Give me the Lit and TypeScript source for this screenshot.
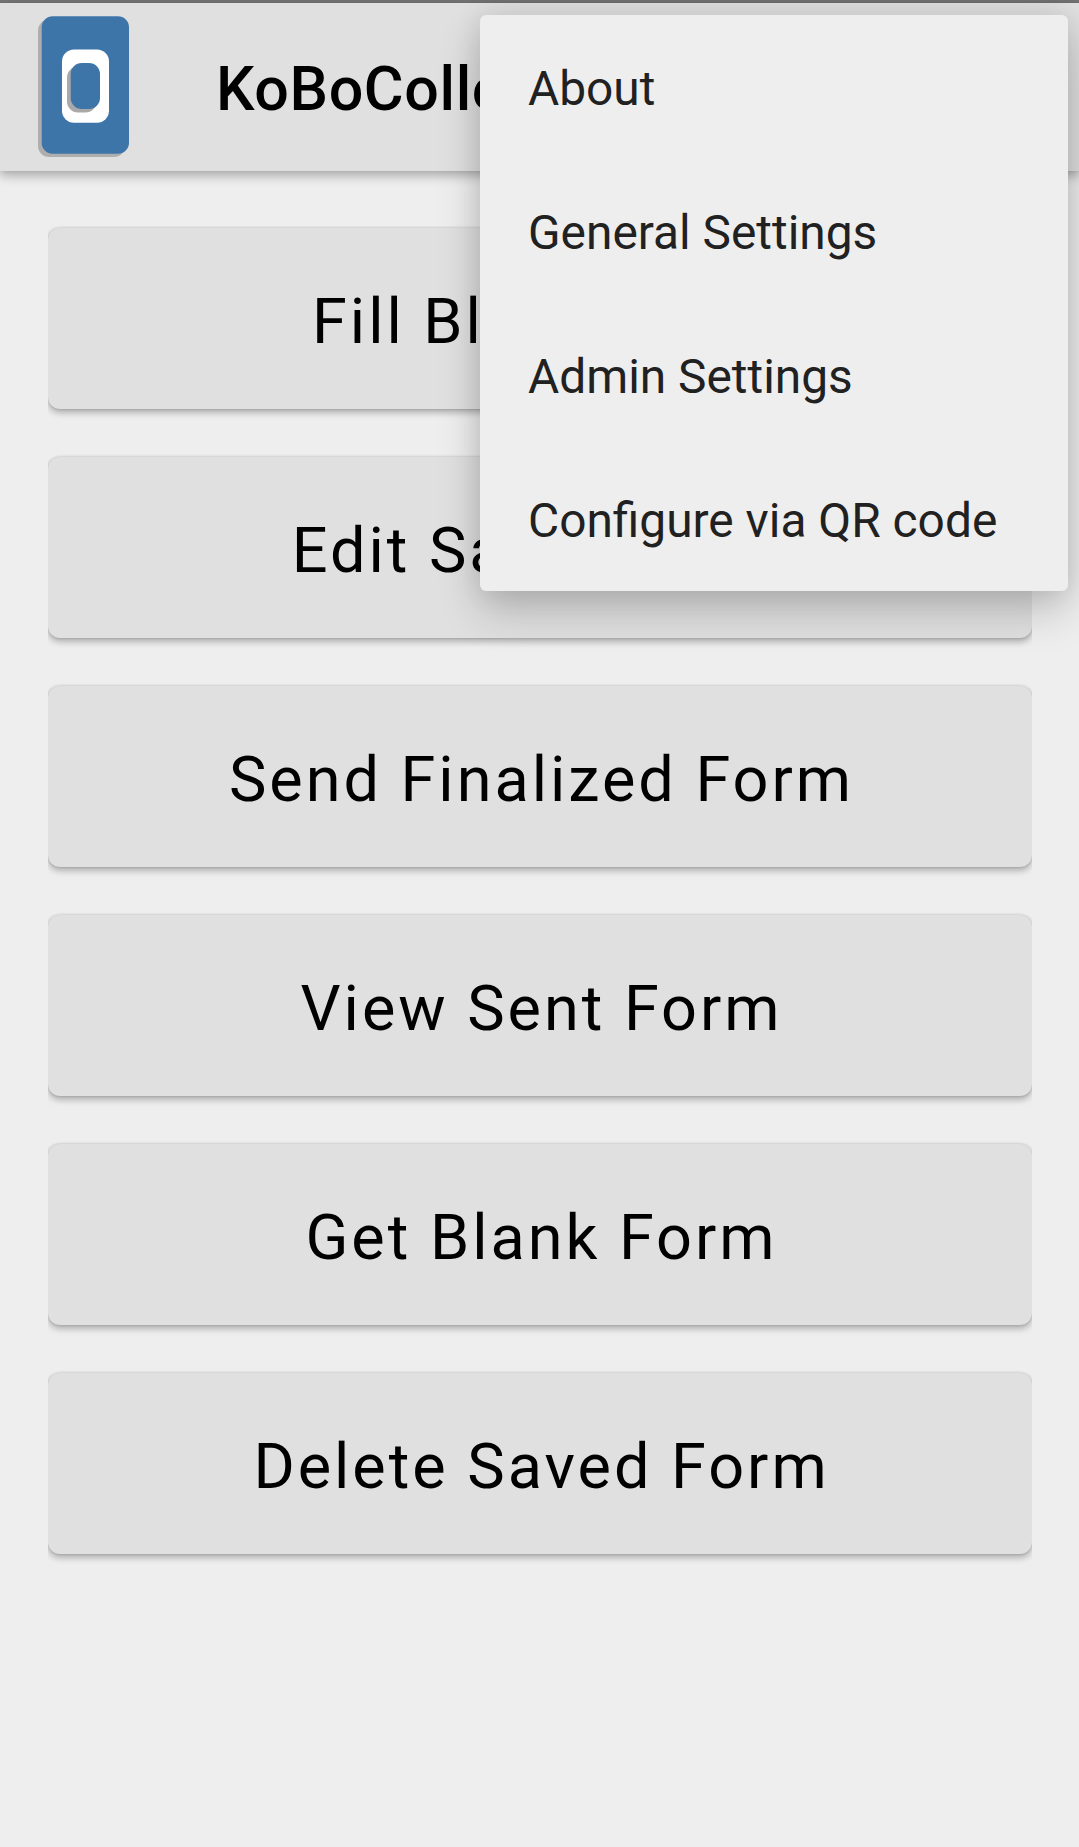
import { LitElement, html, css } from "lit";
import { customElement, state } from "lit/decorators.js";

@customElement("app-root")
export class AppRoot extends LitElement {
  static styles = css`
    :host {
      display: block;
      position: relative;
      height: 1847px;
      overflow: hidden;
      background: #eeeeee;
      color: #000;
      font-family: Roboto, "Liberation Sans", sans-serif;
    }
    .status {
      height: 3px;
      background: #757575;
    }
    .bar {
      display: flex;
      align-items: center;
      height: 168px;
      box-sizing: border-box;
      padding-left: 36px;
      background: #e0e0e0;
      box-shadow: 0 5px 10px rgba(0, 0, 0, 0.27), 0 0 4px rgba(0, 0, 0, 0.08);
    }
    .logo {
      width: 96px;
      height: 144px;
      flex: none;
    }
    .title {
      margin: 4px 0 0 84px;
      font-size: 61px;
      line-height: 70px;
      font-weight: 500;
      letter-spacing: 0.6px;
      white-space: nowrap;
    }
    .actions {
      display: flex;
      flex-direction: column;
      gap: 48px;
      padding: 57px 47px 0 48px;
    }
    .action {
      height: 181px;
      padding: 7px 0 0 3px;
      border: 0;
      border-radius: 12px;
      background: #e0e0e0;
      color: #000;
      font: 400 63px/74px Roboto, "Liberation Sans", sans-serif;
      letter-spacing: 2.97px;
      box-shadow: 0 4px 6px rgba(0, 0, 0, 0.25), 0 0 3px rgba(0, 0, 0, 0.2);
      clip-path: inset(-12px 0);
    }
    .menu {
      position: absolute;
      top: 15px;
      right: 11px;
      width: 588px;
      margin: 0;
      padding: 0;
      list-style: none;
      border-radius: 6px;
      background: #eeeeee;
      box-shadow: 0 20px 44px rgba(0, 0, 0, 0.2), 0 0 28px rgba(0, 0, 0, 0.1);
    }
    .entry {
      display: flex;
      align-items: center;
      height: 144px;
      box-sizing: border-box;
      padding: 4px 48px 0;
      font-size: 47.85px;
      line-height: 56px;
      color: #212121;
      white-space: nowrap;
    }
  `;

  @state() private actions = [
    "Fill Blank Form",
    "Edit Saved Form",
    "Send Finalized Form",
    "View Sent Form",
    "Get Blank Form",
    "Delete Saved Form",
  ];

  @state() private entries = ["About", "General Settings", "Admin Settings", "Configure via QR code"];

  render() {
    return html`
      <div class="status"></div>
      <header class="bar">
        <svg class="logo" viewBox="36 15 96 144" aria-hidden="true">
          <rect x="38" y="19.5" width="87" height="137.5" rx="11" fill="#aeaeae" />
          <rect x="41.7" y="16.3" width="87.3" height="137.5" rx="11" fill="#3e75a8" />
          <rect x="62" y="49.4" width="47" height="73.3" rx="12" fill="#fff" />
          <rect x="67" y="66.5" width="29.5" height="46" rx="11" fill="#a9a9a9" />
          <rect x="70.7" y="63" width="29.3" height="46" rx="11" fill="#3e75a8" />
        </svg>
        <div class="title">KoBoCollect</div>
      </header>
      <main class="actions">
        ${this.actions.map((label) => html`<button class="action">${label}</button>`)}
      </main>
      <ul class="menu">
        ${this.entries.map((label) => html`<li class="entry">${label}</li>`)}
      </ul>
    `;
  }
}
